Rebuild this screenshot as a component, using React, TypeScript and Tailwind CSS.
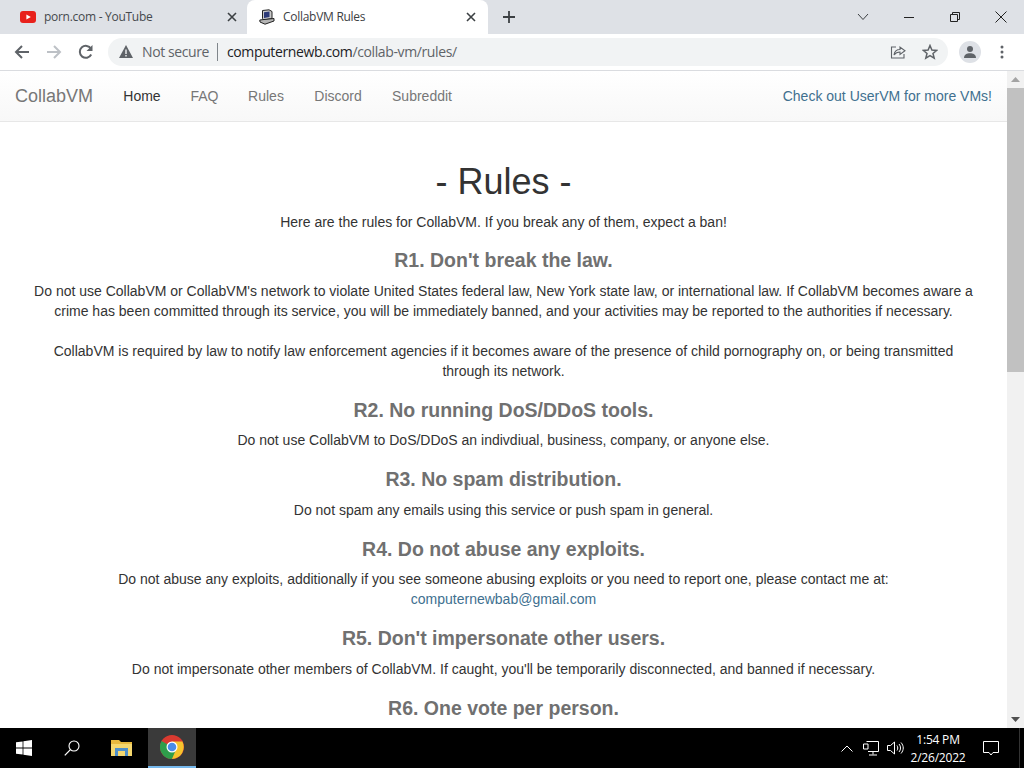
import { ReactNode } from 'react'

const uiFont = 'font-["Open_Sans","Noto_Sans",sans-serif]'
const pageFont = 'font-["Liberation_Sans",Arial,sans-serif]'

const navLinks = [
    { name: 'Home', active: true, w: 'w-[68px]' },
    { name: 'FAQ', active: false, w: 'w-[57px]' },
    { name: 'Rules', active: false, w: 'w-[66px]' },
    { name: 'Discord', active: false, w: 'w-[78px]' },
    { name: 'Subreddit', active: false, w: 'w-[90px]' },
]

function CloseIcon({ className }: { className: string }) {
    return (
        <svg width="12" height="12" viewBox="0 0 12 12" className={className}>
            <path d="M2 2 L10 10 M10 2 L2 10" stroke="#3c4043" strokeWidth="1.6" fill="none" />
        </svg>
    )
}

function YoutubeIcon() {
    return (
        <svg width="16" height="12" viewBox="0 0 16 12" className="shrink-0">
            <rect width="16" height="12" rx="3" fill="#e8211c" />
            <path d="M6.4 3.4 L10.8 6 L6.4 8.6 Z" fill="#fff" />
        </svg>
    )
}

function ComputerIcon() {
    return (
        <svg width="16" height="16" viewBox="0 0 16 16" className="shrink-0">
            <path d="M3.5 1.5 L10 .8 L13 2.5 L13 9.5 L5 11 L3.5 9.5 Z" fill="#c9c9c9" stroke="#222" strokeWidth="1" />
            <path d="M5 3.2 L10.5 2.6 L10.5 8 L5 9 Z" fill="#2d3a78" />
            <path d="M.8 11 L5 10.5 L15 9.5 L15 12 L6 15.2 L1 13 Z" fill="#b5b5b5" stroke="#222" strokeWidth="1" />
        </svg>
    )
}

function Tab({ active, icon, title, width }: { active: boolean; icon: ReactNode; title: string; width: string }) {
    return (
        <div className={`${width} ${active ? 'bg-white rounded-t-lg text-[#3c4043]' : 'text-[#45494d]'} h-full flex items-center text-xs tracking-[-0.28px]`}>
            <div className={`${active ? 'pl-[12px] pr-[11px] gap-[8px]' : 'pl-[20px] pr-[9px] gap-[8px]'} flex items-center w-full`}>
                {icon}
                <span className="flex-1 truncate">{title}</span>
                <CloseIcon className="shrink-0" />
            </div>
        </div>
    )
}

function TabBar() {
    return (
        <div className={`${uiFont} h-[34px] bg-[#dee1e6] flex items-center shrink-0`}>
            <Tab active={false} width="w-[247px]" icon={<YoutubeIcon />} title="porn.com - YouTube" />
            <Tab active={true} width="w-[241px]" icon={<ComputerIcon />} title="CollabVM Rules" />
            <svg width="14" height="14" viewBox="0 0 14 14" className="ml-[14px]">
                <path d="M7 1 V13 M1 7 H13" stroke="#3c4043" strokeWidth="1.8" fill="none" />
            </svg>
            <div className="flex-1" />
            <svg width="12" height="8" viewBox="0 0 12 8" className="mr-[34px]">
                <path d="M1 1 L6 6.5 L11 1" stroke="#3c4043" strokeWidth="1" fill="none" />
            </svg>
            <svg width="12" height="12" viewBox="0 0 12 12" className="mr-[34px]">
                <path d="M1 6.5 H11" stroke="#222" strokeWidth="1" />
            </svg>
            <svg width="12" height="12" viewBox="0 0 12 12" className="mr-[33px]">
                <path d="M1.5 3.5 H8.5 V10.5 H1.5 Z M3.5 3.5 V1.5 H10.5 V8.5 H8.5" stroke="#222" strokeWidth="1" fill="none" />
            </svg>
            <svg width="14" height="14" viewBox="0 0 14 14" className="mr-[16px]">
                <path d="M1.5 1.5 L12.5 12.5 M12.5 1.5 L1.5 12.5" stroke="#222" strokeWidth="1" fill="none" />
            </svg>
        </div>
    )
}

function ToolBar() {
    return (
        <div className={`${uiFont} h-[37px] bg-white border-b border-[#dadce0] flex items-center shrink-0 pb-px`}>
            <svg width="16" height="16" viewBox="0 0 16 16" className="ml-[14px]">
                <path d="M15 8 H2 M8 2 L2 8 L8 14" stroke="#5f6368" strokeWidth="2" fill="none" />
            </svg>
            <svg width="16" height="16" viewBox="0 0 16 16" className="ml-[16px]">
                <path d="M1 8 H14 M8 2 L14 8 L8 14" stroke="#bdc1c6" strokeWidth="2" fill="none" />
            </svg>
            <svg width="16" height="16" viewBox="0 0 16 16" className="ml-[16px]">
                <path d="M13.2 10.5 A6 6 0 1 1 13 4.8" stroke="#5f6368" strokeWidth="2" fill="none" />
                <path d="M14.5 1 V7 H8.5 Z" fill="#5f6368" />
            </svg>
            <div className="ml-[14px] w-[840px] h-[28px] rounded-full bg-[#f1f3f4] flex items-center">
                <svg width="14" height="13" viewBox="0 0 14 13" className="ml-[11px]">
                    <path d="M7 0 L14 13 H0 Z" fill="#5f6368" />
                    <path d="M6.3 4.5 H7.7 V9 H6.3 Z M6.3 10 H7.7 V11.4 H6.3 Z" fill="#f1f3f4" />
                </svg>
                <span className="ml-[9px] text-sm text-[#5f6368] tracking-[-0.4px]">Not secure</span>
                <div className="ml-[8px] w-px h-[18px] bg-[#80868b]" />
                <span className="ml-[9px] text-sm text-[#5f6368] tracking-[-0.38px]">
                    <span className="text-[#202124]">computernewb.com</span>/collab-vm/rules/
                </span>
                <div className="flex-1" />
                <svg width="16" height="16" viewBox="0 0 16 16" className="mr-[16px]">
                    <path d="M6 3 H1.5 V14 H14 V10" stroke="#5f6368" strokeWidth="1.1" fill="none" />
                    <path d="M4 11 C4.5 7.5 7 5.5 10 5.5 V3 L15 6.8 L10 10.5 V8 C7.5 8 5.5 9 4 11 Z" stroke="#5f6368" strokeWidth="1.1" fill="#f1f3f4" />
                </svg>
                <svg width="16" height="16" viewBox="0 0 16 16" className="mr-[10px]">
                    <path d="M8 1.5 L9.9 6 L14.7 6.4 L11 9.5 L12.2 14.2 L8 11.7 L3.8 14.2 L5 9.5 L1.3 6.4 L6.1 6 Z" stroke="#5f6368" strokeWidth="1.5" fill="none" />
                </svg>
            </div>
            <div className="ml-[11px] w-[22px] h-[22px] rounded-full bg-[#dee1e6] flex items-center justify-center">
                <svg width="14" height="14" viewBox="0 0 14 14">
                    <circle cx="7" cy="4" r="3" fill="#5f6368" />
                    <path d="M1 13 C1 9.5 4 8.3 7 8.3 C10 8.3 13 9.5 13 13 Z" fill="#5f6368" />
                </svg>
            </div>
            <svg width="4" height="14" viewBox="0 0 4 14" className="ml-[19px]">
                <circle cx="2" cy="2" r="1.5" fill="#5f6368" />
                <circle cx="2" cy="7" r="1.5" fill="#5f6368" />
                <circle cx="2" cy="12" r="1.5" fill="#5f6368" />
            </svg>
        </div>
    )
}

function NavBar() {
    return (
        <nav className="h-[51px] shrink-0 flex items-center bg-gradient-to-b from-white to-[#f8f8f8] border-b border-[#e7e7e7] pl-[15px] pr-[15px] text-sm">
            <span className="text-lg text-[#777] w-[93px]">CollabVM</span>
            {navLinks.map((l, key) => (
                <span key={key} className={`${l.active ? 'text-[#333]' : 'text-[#777]'} ${l.w} shrink-0 text-center`}>
                    {l.name}
                </span>
            ))}
            <div className="flex-1" />
            <span className="text-[#40708f]">Check out UserVM for more VMs!</span>
        </nav>
    )
}

function Rule({ title, children }: { title: string; children?: ReactNode }) {
    return (
        <>
            <h3 className="mt-[18.6px] mb-[9.4px] text-[19.5px] font-bold text-[#707070] leading-[21.5px]">{title}</h3>
            {children}
        </>
    )
}

function Rules() {
    return (
        <main className={`${pageFont} flex-1 min-w-0 flex flex-col overflow-hidden bg-white text-sm leading-5 text-[#333]`}>
            <NavBar />
            <div className="w-[940px] mx-auto text-center">
                <h1 className="mt-10 mb-[9.5px] text-4xl leading-[40px] text-[#333]">- Rules -</h1>
                <p>Here are the rules for CollabVM. If you break any of them, expect a ban!</p>
                <Rule title="R1. Don't break the law.">
                    <p>
                        Do not use CollabVM or CollabVM's network to violate United States federal law, New York state law, or international law. If CollabVM becomes aware a crime has been committed through its service, you will be immediately banned, and your activities may be reported to the authorities if necessary.
                    </p>
                    <p className="mt-5">
                        CollabVM is required by law to notify law enforcement agencies if it becomes aware of the presence of child pornography on, or being transmitted through its network.
                    </p>
                </Rule>
                <Rule title="R2. No running DoS/DDoS tools.">
                    <p>Do not use CollabVM to DoS/DDoS an indivdiual, business, company, or anyone else.</p>
                </Rule>
                <Rule title="R3. No spam distribution.">
                    <p>Do not spam any emails using this service or push spam in general.</p>
                </Rule>
                <Rule title="R4. Do not abuse any exploits.">
                    <p>
                        Do not abuse any exploits, additionally if you see someone abusing exploits or you need to report one, please contact me at:
                        <br />
                        <span className="text-[#40708f]">computernewbab@gmail.com</span>
                    </p>
                </Rule>
                <Rule title="R5. Don't impersonate other users.">
                    <p>Do not impersonate other members of CollabVM. If caught, you'll be temporarily disconnected, and banned if necessary.</p>
                </Rule>
                <Rule title="R6. One vote per person." />
            </div>
        </main>
    )
}

function ScrollBar() {
    return (
        <div className="w-[17px] shrink-0 bg-[#f1f1f1] flex flex-col items-stretch">
            <div className="h-[17px] flex items-center justify-center">
                <svg width="9" height="5" viewBox="0 0 9 5"><path d="M4.5 0 L9 5 H0 Z" fill="#a3a3a3" /></svg>
            </div>
            <div className="h-[284px] bg-[#c1c1c1]" />
            <div className="flex-1" />
            <div className="h-[17px] flex items-center justify-center">
                <svg width="9" height="5" viewBox="0 0 9 5"><path d="M0 0 H9 L4.5 5 Z" fill="#505050" /></svg>
            </div>
        </div>
    )
}

function ChromeLogo() {
    return (
        <svg width="24" height="24" viewBox="0 0 24 24">
            <circle cx="12" cy="12" r="12" fill="#d93a30" />
            <path d="M12 12 L1.6 6 A12 12 0 0 0 12 24 L18 13.5 Z" fill="#2f9e4b" />
            <path d="M12 6.5 H22.4 A12 12 0 0 1 12 24 L17 12 Z" fill="#f6c42d" />
            <circle cx="12" cy="12" r="5.5" fill="#fff" />
            <circle cx="12" cy="12" r="4.3" fill="#4a8ce8" />
        </svg>
    )
}

function TaskBar() {
    return (
        <div className={`${uiFont} h-10 bg-black shrink-0 flex items-center text-white`}>
            <div className="w-12 flex justify-center">
                <svg width="16" height="16" viewBox="0 0 16 16">
                    <path d="M0 2.3 L6.6 1.4 V7.5 H0 Z M7.4 1.2 L16 0 V7.5 H7.4 Z M0 8.4 H6.6 V14.6 L0 13.7 Z M7.4 8.4 H16 V16 L7.4 14.8 Z" fill="#fff" />
                </svg>
            </div>
            <div className="w-12 flex justify-center">
                <svg width="16" height="16" viewBox="0 0 16 16">
                    <circle cx="10" cy="6" r="5" stroke="#fff" strokeWidth="1.1" fill="none" />
                    <path d="M6.4 9.6 L.8 15.4" stroke="#fff" strokeWidth="1.3" />
                </svg>
            </div>
            <div className="w-[52px] flex justify-center">
                <svg width="22" height="18" viewBox="0 0 22 18">
                    <path d="M0 1 H8 L10 3 H21 V17 H0 Z" fill="#e8b93f" />
                    <path d="M0 5 H21 V17 H0 Z" fill="#f5d76e" />
                    <path d="M4 9 H17 V17 H14 V12 H7 V17 H4 Z" fill="#4f8fc9" />
                </svg>
            </div>
            <div className="w-12 h-full bg-[#3a3a3a] border-b-2 border-[#76b9ed] flex items-center justify-center">
                <ChromeLogo />
            </div>
            <div className="flex-1" />
            <svg width="12" height="7" viewBox="0 0 12 7" className="mr-[10px]">
                <path d="M.5 6.5 L6 1 L11.5 6.5" stroke="#fff" strokeWidth="1" fill="none" />
            </svg>
            <svg width="16" height="15" viewBox="0 0 16 15" className="mr-[8px]">
                <path d="M3.5 .5 H15.5 V10.5 H5 M10 10.5 V13.5 M6 14 H14 M.5 3 H5 V8 H.5 Z" stroke="#fff" strokeWidth="1" fill="none" />
            </svg>
            <svg width="17" height="14" viewBox="0 0 17 14" className="mr-[3px]">
                <path d="M.5 4.5 H3.5 L7.5 1 V13 L3.5 9.5 H.5 Z M10 4.5 C11 6 11 8 10 9.5 M12 3 C14 5.5 14 8.5 12 11 M14 1.5 C17 5 17 9 14 12.5" stroke="#fff" strokeWidth="1" fill="none" />
            </svg>
            <div className="w-[62px] pt-px text-center text-xs leading-[18px] tracking-[-0.2px]">
                <div>1:54 PM</div>
                <div>2/26/2022</div>
            </div>
            <svg width="16" height="15" viewBox="0 0 16 15" className="ml-[14px]">
                <path d="M.5 .5 H15.5 V11.5 H10 L8 14 L6 11.5 H.5 Z" stroke="#fff" strokeWidth="1" fill="none" />
            </svg>
            <div className="ml-[20px] mr-[4px] w-px h-full bg-[#333]" />
        </div>
    )
}

export default function App() {
    return (
        <div className="w-[1024px] h-[768px] overflow-hidden flex flex-col">
            <TabBar />
            <ToolBar />
            <div className="flex-1 min-h-0 flex">
                <Rules />
                <ScrollBar />
            </div>
            <TaskBar />
        </div>
    )
}
